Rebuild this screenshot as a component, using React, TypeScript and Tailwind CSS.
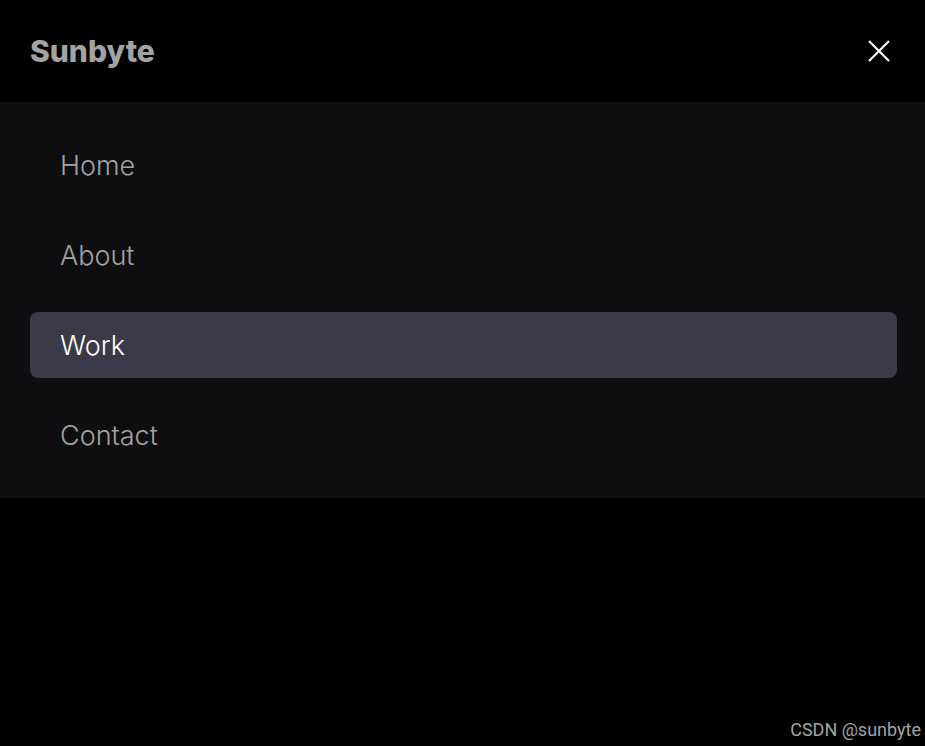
import { useState } from "react";

const links = ["Home", "About", "Work", "Contact"];

export default function App() {
  const [open, setOpen] = useState(true);
  const [active, setActive] = useState("Work");

  return (
    <div className="flex min-h-screen flex-col bg-black font-['Inter',sans-serif] text-[#a3a3a3]">
      <header className="flex items-center justify-between px-[30px] py-7">
        <a href="#" className="text-3xl leading-[46px] font-extrabold">
          Sunbyte
        </a>
        <button
          type="button"
          aria-label="Toggle menu"
          aria-expanded={open}
          onClick={() => setOpen(!open)}
          className="p-1 text-white"
        >
          <svg viewBox="0 0 24 24" className="size-6" fill="none" stroke="currentColor" strokeWidth="2.2">
            <path d="M2 2l20 20M22 2L2 22" />
          </svg>
        </button>
      </header>

      {open && (
        <nav className="bg-[#0e0e10] py-[30px] pr-7 pl-[30px]">
          <ul className="flex flex-col gap-6">
            {links.map((link) => (
              <li key={link}>
                <a
                  href={`#${link.toLowerCase()}`}
                  onClick={() => setActive(link)}
                  className={`block rounded-lg px-[30px] pt-4 pb-[14px] text-[27px] leading-9 font-light ${
                    active === link ? "bg-[#3b3a48] text-white" : ""
                  }`}
                >
                  {link}
                </a>
              </li>
            ))}
          </ul>
        </nav>
      )}

      <footer className="mt-auto px-1 pb-[2px] text-right font-[Roboto,sans-serif] text-lg">
        CSDN @sunbyte
      </footer>
    </div>
  );
}
